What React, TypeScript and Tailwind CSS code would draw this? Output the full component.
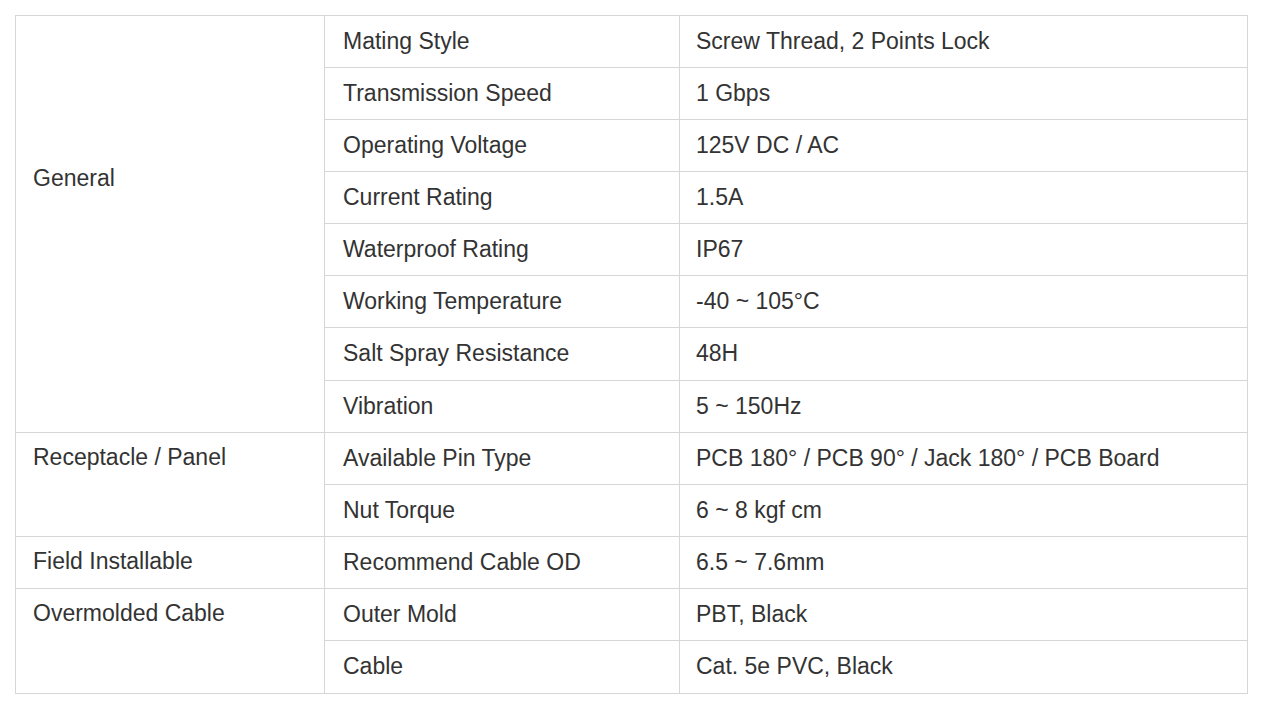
import React from "react";

interface SpecGroup {
  name: string;
  padTop: string;
  rows: { label: string; value: string; h: string }[];
}

const groups: SpecGroup[] = [
  {
    name: "General",
    padTop: "pt-[149px]",
    rows: [
      { label: "Mating Style", value: "Screw Thread, 2 Points Lock", h: "h-[52px]" },
      { label: "Transmission Speed", value: "1 Gbps", h: "h-[52px]" },
      { label: "Operating Voltage", value: "125V DC / AC", h: "h-[52px]" },
      { label: "Current Rating", value: "1.5A", h: "h-[52px]" },
      { label: "Waterproof Rating", value: "IP67", h: "h-[52px]" },
      { label: "Working Temperature", value: "-40 ~ 105°C", h: "h-[52px]" },
      { label: "Salt Spray Resistance", value: "48H", h: "h-[53px]" },
      { label: "Vibration", value: "5 ~ 150Hz", h: "h-[52px]" },
    ],
  },
  {
    name: "Receptacle / Panel",
    padTop: "pt-[11px]",
    rows: [
      { label: "Available Pin Type", value: "PCB 180° / PCB 90° / Jack 180° / PCB Board", h: "h-[52px]" },
      { label: "Nut Torque", value: "6 ~ 8 kgf cm", h: "h-[52px]" },
    ],
  },
  {
    name: "Field Installable",
    padTop: "pt-[11px]",
    rows: [{ label: "Recommend Cable OD", value: "6.5 ~ 7.6mm", h: "h-[52px]" }],
  },
  {
    name: "Overmolded Cable",
    padTop: "pt-[11px]",
    rows: [
      { label: "Outer Mold", value: "PBT, Black", h: "h-[52px]" },
      { label: "Cable", value: "Cat. 5e PVC, Black", h: "h-[53px]" },
    ],
  },
];

const cell = "border border-[#d6d6d6] pr-3 leading-[26px]";

export default function App() {
  return (
    <div className="min-h-[704px] bg-white p-[15px] font-['Liberation_Sans',Arial,sans-serif] text-[23px] text-[#333333]">
      <table className="w-[1233px] table-fixed border-collapse">
        <colgroup>
          <col className="w-[309px]" />
          <col className="w-[355px]" />
          <col />
        </colgroup>
        <tbody>
          {groups.map((g) =>
            g.rows.map((r, i) => (
              <tr key={g.name + r.label} className={r.h}>
                {i === 0 && (
                  <td rowSpan={g.rows.length} className={`${cell} pl-[17px] align-top ${g.padTop}`}>
                    {g.name}
                  </td>
                )}
                <td className={`${cell} pl-[18px] pb-[2px] align-middle`}>{r.label}</td>
                <td className={`${cell} pl-[16px] pb-[2px] align-middle`}>{r.value}</td>
              </tr>
            ))
          )}
        </tbody>
      </table>
    </div>
  );
}
